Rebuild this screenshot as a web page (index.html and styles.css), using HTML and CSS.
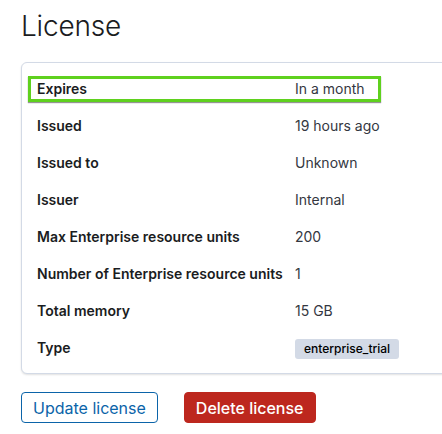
FILE: index.html
```html
<!DOCTYPE html>
<html>
<head>
<meta charset="utf-8">
<link rel="stylesheet" href="styles.css">
</head>
<body>
<div class="page">
  <h1 class="title">License</h1>
  <div class="panel">
    <div class="rows">
      <div class="row row-highlight"><span class="label">Expires</span><span class="value">In a month</span></div>
      <div class="row"><span class="label">Issued</span><span class="value">19 hours ago</span></div>
      <div class="row"><span class="label">Issued to</span><span class="value">Unknown</span></div>
      <div class="row"><span class="label">Issuer</span><span class="value">Internal</span></div>
      <div class="row"><span class="label">Max Enterprise resource units</span><span class="value">200</span></div>
      <div class="row"><span class="label">Number of Enterprise resource units</span><span class="value">1</span></div>
      <div class="row"><span class="label">Total memory</span><span class="value">15 GB</span></div>
      <div class="row"><span class="label">Type</span><span class="value"><span class="badge">enterprise_trial</span></span></div>
    </div>
  </div>
  <div class="actions">
    <button class="btn btn-outline">Update license</button>
    <button class="btn btn-danger">Delete license</button>
  </div>
</div>
</body>
</html>
```
FILE: styles.css
```css
html, body {
  margin: 0;
  padding: 0;
  background: #ffffff;
  overflow: hidden;
}
body {
  font-family: Inter, "Noto Sans", sans-serif;
  color: #1a1c21;
  width: 442px;
  height: 434px;
}
.page {
  width: 442px;
  height: 434px;
  box-sizing: border-box;
  overflow: hidden;
  padding: 9px 0 0 21px;
}
.title {
  margin: 0;
  font-size: 28px;
  line-height: 34px;
  font-weight: 300;
  color: #1a1c21;
  letter-spacing: -0.2px;
}
.panel {
  margin-top: 19px;
  width: 480px;
  border: 1px solid #d3dae6;
  border-radius: 6px;
  background: #fff;
  box-shadow: 0 1px 2px rgba(0, 0, 0, 0.12);
  padding: 13px 0 12px 6px;
}
.rows {
  display: flex;
  flex-direction: column;
  gap: 11px;
  width: 353px;
}
.row {
  display: grid;
  grid-template-columns: 258px 1fr;
  align-items: center;
  height: 26px;
  box-sizing: border-box;
  padding: 0 0 0 9px;
  font-size: 14px;
  line-height: 20px;
}
.row-highlight {
  border: 3px solid #5fd11e;
  padding-left: 6px;
  box-shadow: 0 1px 1px rgba(60, 60, 60, 0.55);
}
.label {
  font-weight: 600;
  color: #1a1c21;
}
.value {
  color: #343741;
  font-weight: 400;
}
.badge {
  display: inline-block;
  background: #d3dae6;
  color: #000;
  font-size: 12px;
  line-height: 20px;
  height: 20px;
  padding: 0 9px;
  border-radius: 3px;
  font-weight: 500;
}
.actions {
  display: flex;
  gap: 26px;
  margin-top: 18px;
}
.btn {
  font-family: Inter, "Noto Sans", sans-serif;
  font-size: 16px;
  height: 31px;
  border-radius: 4px;
  padding: 0 11px;
  cursor: pointer;
  line-height: 20px;
}
.btn-outline {
  background: #fff;
  color: #0b64a9;
  border: 1px solid #0b64a9;
  font-weight: 400;
}
.btn-danger {
  background: #bd271e;
  color: #fff;
  border: 1px solid #bd271e;
  font-weight: 500;
}
```
